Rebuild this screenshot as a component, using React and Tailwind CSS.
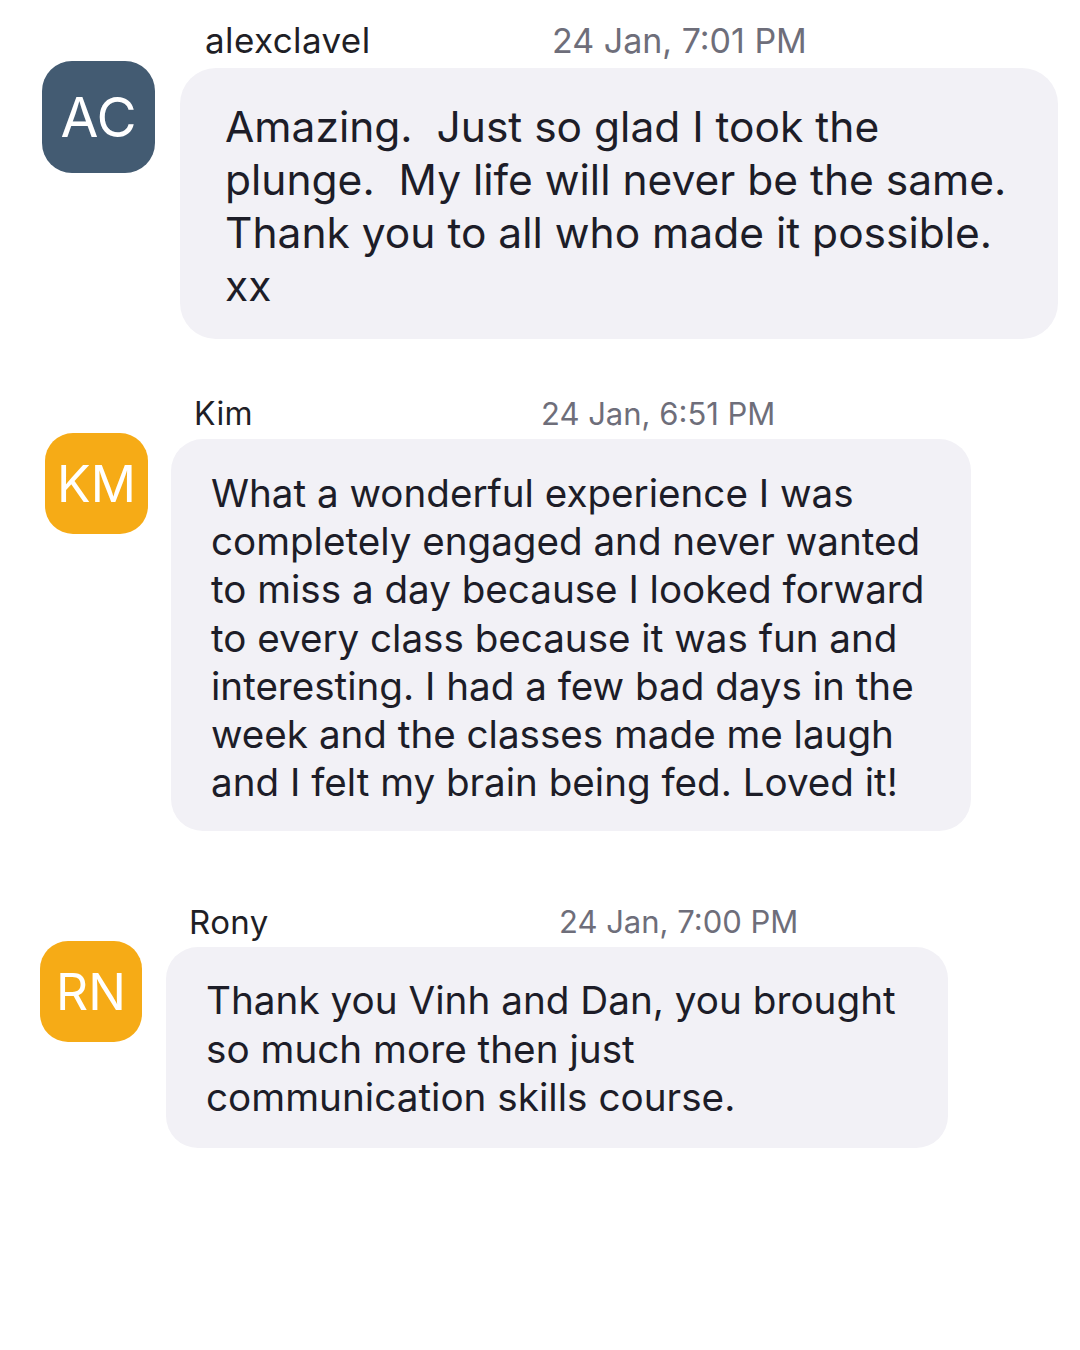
import React from 'react';

const messages = [
  {
    id: 1,
    initials: 'AC',
    name: 'alexclavel',
    time: '24 Jan, 7:01 PM',
    avatarBg: 'bg-[#435b72]',
    lines: [
      'Amazing.  Just so glad I took the',
      'plunge.  My life will never be the same.',
      'Thank you to all who made it possible.',
      'xx',
    ],
  },
  {
    id: 2,
    initials: 'KM',
    name: 'Kim',
    time: '24 Jan, 6:51 PM',
    avatarBg: 'bg-[#f6ab16]',
    lines: [
      'What a wonderful experience I was',
      'completely engaged and never wanted',
      'to miss a day because I looked forward',
      'to every class because it was fun and',
      'interesting. I had a few bad days in the',
      'week and the classes made me laugh',
      'and I felt my brain being fed. Loved it!',
    ],
  },
  {
    id: 3,
    initials: 'RN',
    name: 'Rony',
    time: '24 Jan, 7:00 PM',
    avatarBg: 'bg-[#f6ab16]',
    lines: [
      'Thank you Vinh and Dan, you brought',
      'so much more then just',
      'communication skills course.',
    ],
  },
];

const App = () => {
  const [first, second, third] = messages;

  return (
    <div
      className="w-[1080px] h-[1350px] bg-white overflow-hidden"
      style={{ fontFamily: 'Inter, "Noto Sans", sans-serif' }}
    >
      {/* alexclavel */}
      <div className="flex pt-[20px] pl-[42px]">
        <div
          className={`mt-[41px] w-[113px] h-[112px] rounded-[30px] ${first.avatarBg} flex items-center justify-center text-white text-[55px] leading-none shrink-0`}
        >
          {first.initials}
        </div>
        <div className="ml-[25px] flex flex-col">
          <div className="h-[40px] flex items-center pl-[25px]">
            <span className="w-[347px] text-[#1f1f26] text-[35px] tracking-[0.4px]">{first.name}</span>
            <span className="text-[#6e6e7a] text-[34px]">{first.time}</span>
          </div>
          <div className="mt-[8px] w-[878px] rounded-[36px] bg-[#f2f1f6] pl-[45px] pt-[32px] pb-[27px] text-[42.5px] leading-[53px] text-[#1d1d28] whitespace-pre">
            {first.lines.map((line, i) => (
              <div key={i}>{line}</div>
            ))}
          </div>
        </div>
      </div>

      {/* Kim */}
      <div className="flex mt-[55px] pl-[45px]">
        <div
          className={`mt-[39px] w-[103px] h-[101px] rounded-[28px] ${second.avatarBg} flex items-center justify-center text-white text-[50px] leading-none shrink-0`}
        >
          {second.initials}
        </div>
        <div className="ml-[23px] flex flex-col">
          <div className="h-[40px] flex items-center pl-[23px]">
            <span className="w-[347px] text-[#1f1f26] text-[32px] tracking-[0.4px]">{second.name}</span>
            <span className="text-[#6e6e7a] text-[31px]">{second.time}</span>
          </div>
          <div className="mt-[5px] w-[800px] rounded-[32px] bg-[#f2f1f6] pl-[40px] pt-[30px] pb-[25px] text-[38.6px] leading-[48.2px] text-[#1d1d28] whitespace-pre">
            {second.lines.map((line, i) => (
              <div key={i}>{line}</div>
            ))}
          </div>
        </div>
      </div>

      {/* Rony */}
      <div className="flex mt-[71px] pl-[40px]">
        <div
          className={`mt-[39px] w-[102px] h-[101px] rounded-[28px] ${third.avatarBg} flex items-center justify-center text-white text-[50px] leading-none shrink-0`}
        >
          {third.initials}
        </div>
        <div className="ml-[24px] flex flex-col">
          <div className="h-[40px] flex items-center pl-[23px]">
            <span className="w-[370px] text-[#1f1f26] text-[33px] tracking-[0.4px]">{third.name}</span>
            <span className="text-[#6e6e7a] text-[31px]">{third.time}</span>
          </div>
          <div className="mt-[5px] w-[782px] rounded-[32px] bg-[#f2f1f6] pl-[40px] pt-[29px] pb-[26px] text-[38.7px] leading-[48.5px] text-[#1d1d28] whitespace-pre">
            {third.lines.map((line, i) => (
              <div key={i}>{line}</div>
            ))}
          </div>
        </div>
      </div>
    </div>
  );
};

export default App;
